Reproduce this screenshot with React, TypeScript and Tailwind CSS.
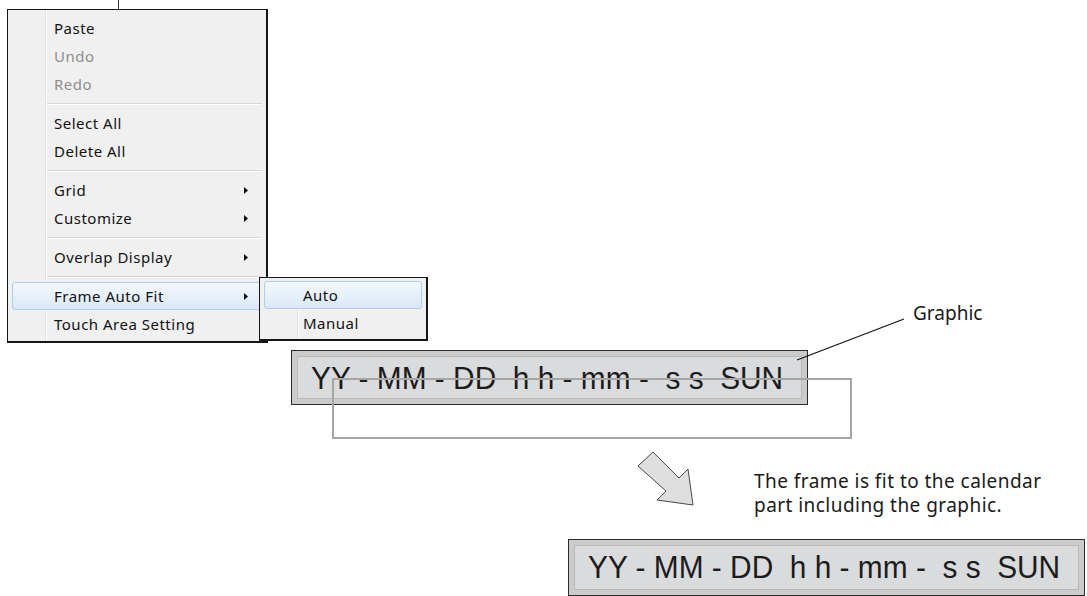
import React from "react";

type MenuEntry =
  | { kind: "item"; label: string; disabled?: boolean; sub?: boolean; active?: boolean }
  | { kind: "sep" };

const MAIN_MENU: MenuEntry[] = [
  { kind: "item", label: "Paste" },
  { kind: "item", label: "Undo", disabled: true },
  { kind: "item", label: "Redo", disabled: true },
  { kind: "sep" },
  { kind: "item", label: "Select All" },
  { kind: "item", label: "Delete All" },
  { kind: "sep" },
  { kind: "item", label: "Grid", sub: true },
  { kind: "item", label: "Customize", sub: true },
  { kind: "sep" },
  { kind: "item", label: "Overlap Display", sub: true },
  { kind: "sep" },
  { kind: "item", label: "Frame Auto Fit", sub: true, active: true },
  { kind: "item", label: "Touch Area Setting" },
];

const CALENDAR_TEXT = "YY - MM - DD  h h - mm -  s s  SUN";

function SubArrow() {
  return (
    <svg width="4" height="7" viewBox="0 0 4 7" className="shrink-0">
      <path d="M0 0 L4 3.5 L0 7 Z" fill="#111" />
    </svg>
  );
}

function MenuRow({ entry, textPad }: { entry: MenuEntry; textPad: "main" | "sub" }) {
  if (entry.kind === "sep") {
    return (
      <div className="h-[11px] pt-[5px] ml-[39px] mr-[4px]">
        <div className="h-px bg-[#d7d7d7]" />
        <div className="h-px bg-white" />
      </div>
    );
  }
  const box = entry.active
    ? "border-[#aecdf3] bg-gradient-to-b from-[#f3f8fe] to-[#dbe8f8]"
    : "border-transparent";
  const color = entry.disabled ? "text-[#8e8e8e]" : "text-[#121212]";
  const pad = textPad === "main" ? "pl-[41px] pr-[13px]" : "pl-[38px] pr-[13px]";
  return (
    <div className={`mx-[4px] h-[28px] flex items-center justify-between border rounded-[3px] ${box} ${pad}`}>
      <span className={`tracking-[0.5px] ${color}`}>{entry.label}</span>
      {entry.sub && <SubArrow />}
    </div>
  );
}

function ContextMenu() {
  return (
    <div className="relative ml-[7px] mt-[9px] w-[261px] border border-r-2 border-b-2 border-[#161616] bg-[#f0f0f0] pt-[4px] pb-[3px]">
      <div className="absolute left-[37px] top-0 bottom-0 w-px bg-[#e0e0e0]" />
      <div className="absolute left-[38px] top-0 bottom-0 w-px bg-white" />
      <div className="relative flex flex-col">
        {MAIN_MENU.map((entry, i) => (
          <MenuRow key={i} entry={entry} textPad="main" />
        ))}
      </div>
    </div>
  );
}

function SubMenu() {
  return (
    <div className="absolute left-[259px] top-[277px] w-[169px] border border-r-2 border-b-2 border-[#161616] bg-[#f0f0f0] pt-[3px] pb-[2px]">
      <div className="absolute left-[37px] top-0 bottom-0 w-px bg-[#e0e0e0]" />
      <div className="absolute left-[38px] top-0 bottom-0 w-px bg-white" />
      <div className="relative flex flex-col">
        <MenuRow entry={{ kind: "item", label: "Auto", active: true }} textPad="sub" />
        <MenuRow entry={{ kind: "item", label: "Manual" }} textPad="sub" />
      </div>
    </div>
  );
}

// calendar parts share one look; only their place differs
function CalendarPart({ className }: { className: string }) {
  return (
    <div className={`w-[517px] h-[57px] border border-[#2b2b2b] bg-[#cbcbcb] p-[5px] ${className}`}>
      <div className="h-full border border-[#b9b9b9] bg-[#dadbdc] pl-[13px] pt-[5px]">
        <span className="inline-block whitespace-pre origin-left scale-x-[0.933] text-[32px] leading-[32px] text-[#1c1c1c] font-['Liberation_Sans',Arial,sans-serif]">
          {CALENDAR_TEXT}
        </span>
      </div>
    </div>
  );
}

export default function App() {
  return (
    <div className="relative flex flex-col w-[1087px] h-[596px] overflow-hidden bg-white font-['Noto_Sans','Open_Sans',sans-serif] text-[15px]">
      <div className="absolute left-[118px] top-0 w-px h-[9px] bg-[#333]" />

      <ContextMenu />
      <CalendarPart className="ml-[291px] mt-[7px]" />

      <p className="ml-[754px] mt-[64px] text-[19px] leading-[24px] tracking-[0.45px] text-[#1a1a1a]">
        The frame is fit to the calendar
        <br />
        part including the graphic.
      </p>

      <CalendarPart className="ml-[568px] mt-[22px] shrink-0" />

      <SubMenu />

      {/* frame before Auto Fit */}
      <div className="absolute left-[332px] top-[378px] w-[520px] h-[61px] border-2 border-[#a6a6a6]" />

      <span className="absolute left-[913px] top-[301px] text-[19px] leading-[24px] text-[#1a1a1a]">Graphic</span>

      <svg className="absolute inset-0 pointer-events-none" width="1087" height="596">
        <line x1="797" y1="360" x2="904" y2="319" stroke="#111" strokeWidth="1.2" />
        <polygon
          points="653,452 679,478 688,469 693,505 657,500 666,491 638,466"
          fill="#dedede"
          stroke="#4a4a4a"
          strokeWidth="1"
        />
      </svg>
    </div>
  );
}
